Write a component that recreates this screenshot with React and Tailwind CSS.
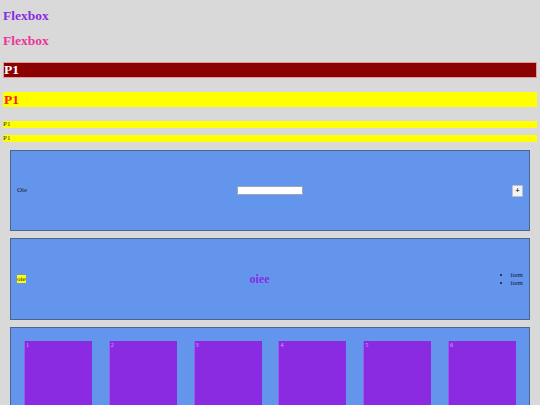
import React from "react";

const serif = { fontFamily: '"Liberation Serif", "Times New Roman", serif' };

export default function App() {
  const boxes = [1, 2, 3, 4, 5, 6];

  return (
    <div className="w-[540px] h-[405px] overflow-hidden bg-[#d9d9d9] px-[3px]" style={serif}>
      {/* Headings */}
      <div className="pt-[8px]">
        <h1 className="text-[13.5px] leading-[16px] font-bold text-[#8a2be2]">Flexbox</h1>
        <h1 className="mt-[9px] text-[13.5px] leading-[16px] font-bold text-[#e9369a]">Flexbox</h1>
      </div>

      {/* Bars */}
      <p className="mt-[13px] h-[16px] border border-[#e59a9a] bg-[#8b0000] text-[13.5px] leading-[14px] font-bold text-white">
        P1
      </p>
      <p className="mt-[14px] h-[15px] bg-[#ffff00] px-[1px] text-[13.5px] leading-[15px] font-bold text-[#f0261f]">
        P1
      </p>
      <p className="mt-[14px] h-[7px] bg-[#ffff00] text-[7px] leading-[7px] text-[#333]">P1</p>
      <p className="mt-[7px] h-[7px] bg-[#ffff00] text-[7px] leading-[7px] text-[#333]">P1</p>

      {/* Box 1 */}
      <div className="mx-[7px] mt-[8px] h-[81px] border border-[#4a6590] bg-[#6495ed] flex items-center justify-between px-[6px] text-[7px] text-[#1a1a2e]">
        <span>Oie</span>
        <div className="w-[66px] h-[9px] bg-white border border-[#9aa5b8]" />
        <div className="w-[11px] h-[12px] bg-[#f3f3f3] border border-[#b9c0cc] rounded-[1px] flex items-center justify-center text-[8px] leading-none font-bold text-black">
          +
        </div>
      </div>

      {/* Box 2 */}
      <div className="mx-[7px] mt-[7px] h-[82px] border border-[#4a6590] bg-[#6495ed] flex items-center justify-between px-[6px] text-[7px] text-[#1a1a2e]">
        <span className="bg-[#ffff00] leading-[8px]">oie</span>
        <span className="text-[12px] font-bold text-[#8a2be2]">oiee</span>
        <ul className="list-disc pl-[17px] leading-[8px]">
          <li>item</li>
          <li>item</li>
        </ul>
      </div>

      {/* Box 3 */}
      <div className="mx-[7px] mt-[7px] h-[96px] border border-[#4a6590] bg-[#6495ed] flex justify-between px-[13px] pt-[13px]">
        {boxes.map((n) => (
          <div
            key={n}
            className="w-[68px] h-[68px] bg-[#8a2be2] border-l border-[#9d5cf0] px-[1px] text-[6px] leading-[8px] text-[#d4a3ff]"
          >
            {n}
          </div>
        ))}
      </div>
    </div>
  );
}
